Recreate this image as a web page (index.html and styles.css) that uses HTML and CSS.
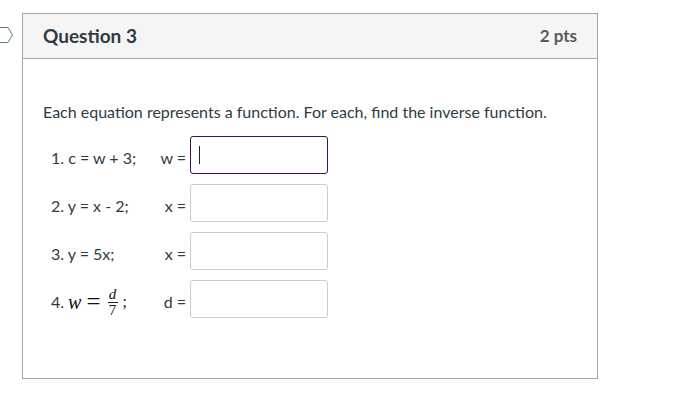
FILE: index.html
```html
<!DOCTYPE html>
<html lang="en">
<head>
<meta charset="utf-8">
<title>Question 3</title>
<link rel="stylesheet" href="styles.css">
</head>
<body>
<main class="page">
  <svg class="flag" viewBox="0 0 14 18" aria-hidden="true"><path d="M0 1.5H8L12.5 9L8 16.5H0" fill="#fff" stroke="#5f7c86"/></svg>
  <section class="question">
    <header class="question-header">
      <h2 class="title">Question 3</h2>
      <span class="points">2 pts</span>
    </header>
    <div class="question-body">
      <p class="prompt">Each equation represents a function. For each, find the inverse function.</p>
      <div class="rows">
        <div class="row">
          <span class="equation">1. c = w + 3;</span>
          <label class="variable" for="a1">w =</label>
          <input class="answer active" id="a1" type="text">
        </div>
        <div class="row">
          <span class="equation">2. y = x - 2;</span>
          <label class="variable" for="a2">x =</label>
          <input class="answer" id="a2" type="text">
        </div>
        <div class="row">
          <span class="equation">3. y = 5x;</span>
          <label class="variable" for="a3">x =</label>
          <input class="answer" id="a3" type="text">
        </div>
        <div class="row">
          <span class="equation with-math">4. <span class="math"><i class="math-var">w</i><span class="math-eq">=</span><span class="fraction"><i class="numerator">d</i><span class="denominator">7</span></span><span>;</span></span></span>
          <label class="variable" for="a4">d =</label>
          <input class="answer" id="a4" type="text">
        </div>
      </div>
    </div>
  </section>
</main>
</body>
</html>
```

FILE: styles.css
```css
* { box-sizing: border-box; }

body {
  margin: 0;
  background: #fff;
  color: #2d3b45;
  font: 16px/24px Lato, "Liberation Sans", sans-serif;
}

.page {
  position: relative;
  padding: 13px 89px 26px 22px;
}

.flag {
  position: absolute;
  left: 0;
  top: 26px;
  width: 14px;
  height: 18px;
}

.question { border: 1px solid #a5a5a5; }

.question-header {
  display: flex;
  align-items: center;
  justify-content: space-between;
  padding: 10px 20px;
  background: #f5f5f5;
  border-bottom: 1px solid #a5a5a5;
}

.title {
  margin: 0;
  font-size: 19px;
  line-height: 24px;
  font-weight: 700;
}

.points {
  color: #595959;
  font-size: 17px;
  font-weight: 700;
}

.question-body { padding: 41px 20px 60px; }

.prompt { margin: 0 0 12px; }

.rows {
  display: grid;
  gap: 10px;
  padding-left: 8px;
}

.row {
  display: grid;
  grid-template-columns: 100px 35px 138px;
  align-items: center;
}

.equation,
.variable { padding-top: 6px; }

.variable { text-align: right; }

.answer {
  width: 138px;
  height: 38px;
  margin-left: 4px;
  padding: 8px;
  border: 1px solid #c7cdd1;
  border-radius: 3px;
  background: #fff;
  color: inherit;
  font: inherit;
}

/* Text cursor of the active field */
.active {
  border-color: #3d1152;
  background: linear-gradient(#222, #222) 8px 9px / 1px 18px no-repeat #fff;
}

.with-math {
  display: flex;
  align-items: center;
  gap: 4px;
}

.math {
  display: flex;
  align-items: center;
  color: #111;
  font-family: "Liberation Serif", serif;
}

.math-var { font-size: 20px; }

.math-eq {
  margin: 0 7px 0 5px;
  font-size: 25px;
}

.fraction {
  display: grid;
  width: 10px;
  margin-right: 5px;
  text-align: center;
  font-size: 15px;
  line-height: 15px;
}

.numerator { border-bottom: 1px solid #222; }
```
